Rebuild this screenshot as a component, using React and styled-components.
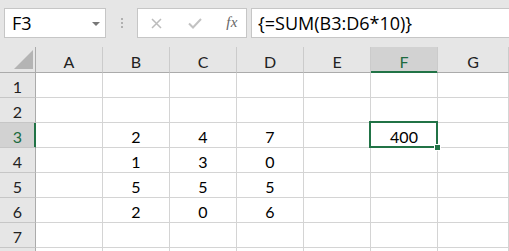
import styled, { createGlobalStyle } from 'styled-components'

const GREEN = '#217346'

const GlobalStyle = createGlobalStyle`
   html, body {
      margin: 0;
      padding: 0;
      background: #ffffff;
   }
   body {
      font-family: Lato, 'Liberation Sans', sans-serif;
   }
`

const columns = ['A', 'B', 'C', 'D', 'E', 'F', 'G']

const data = {
   3: { B: 2, C: 4, D: 7, F: 400 },
   4: { B: 1, C: 3, D: 0 },
   5: { B: 5, C: 5, D: 5 },
   6: { B: 2, C: 0, D: 6 },
}

const active = { col: 'F', row: 3 }

const rows = [1, 2, 3, 4, 5, 6, 7, 8]
const visibleLabel = (r) => (r <= 7 ? r : '')

export default function App() {
   return (
      <Window>
         <GlobalStyle />

         <FormulaBar>
            <NameBox>
               <span>F3</span>
               <Caret />
            </NameBox>

            <Grip>
               <i />
               <i />
               <i />
            </Grip>

            <ButtonGroup>
               <IconButton>
                  <svg width="11" height="11" viewBox="0 0 11 11">
                     <path d="M1 1 L10 10 M10 1 L1 10" stroke="#bcbcbc" strokeWidth="1.5" fill="none" />
                  </svg>
               </IconButton>
               <IconButton>
                  <svg width="14" height="11" viewBox="0 0 14 11">
                     <path d="M1 5.5 L5 9.5 L13 1" stroke="#c2c2c2" strokeWidth="2" fill="none" />
                  </svg>
               </IconButton>
               <Fx>fx</Fx>
            </ButtonGroup>

            <FormulaInput>{'{=SUM(B3:D6*10)}'}</FormulaInput>
         </FormulaBar>

         <Sheet>
            <Corner>
               <svg width="19" height="19" viewBox="0 0 19 19">
                  <polygon points="19,0 19,19 0,19" fill="#b4b4b4" />
               </svg>
            </Corner>
            {columns.map((c) => (
               <ColHead key={c} $selected={c === active.col}>
                  {c}
               </ColHead>
            ))}

            {rows.map((r) => (
               <Row key={r}>
                  <RowHead $selected={r === active.row}>{visibleLabel(r)}</RowHead>
                  {columns.map((c) => {
                     const isActive = r === active.row && c === active.col
                     const value = data[r] ? data[r][c] : undefined
                     return (
                        <Cell key={c} $active={isActive}>
                           {value}
                           {isActive && <FillHandle />}
                        </Cell>
                     )
                  })}
               </Row>
            ))}
         </Sheet>
      </Window>
   )
}

const Window = styled.div`
   width: 100%;
   height: 100vh;
   overflow: hidden;
   background: #ffffff;
`

const FormulaBar = styled.div`
   display: flex;
   align-items: stretch;
   height: 47px;
   padding: 8px 0 9px 4px;
   box-sizing: border-box;
   background: #e6e6e6;
   font-family: 'Open Sans', 'Liberation Sans', sans-serif;
   font-size: 18px;
   color: #000;
`

const NameBox = styled.div`
   width: 102px;
   box-sizing: border-box;
   background: #fff;
   border: 1px solid #c6c6c6;
   display: flex;
   align-items: center;
   justify-content: space-between;
   padding: 0 5px 0 7px;

   span {
      line-height: 1;
      margin-top: -1px;
   }
`

const Caret = styled.div`
   width: 0;
   height: 0;
   border-left: 4px solid transparent;
   border-right: 4px solid transparent;
   border-top: 4px solid #777;
   margin-top: 1px;
`

const Grip = styled.div`
   width: 31px;
   display: flex;
   flex-direction: column;
   align-items: center;
   justify-content: center;
   gap: 2px;

   i {
      display: block;
      width: 2px;
      height: 2px;
      background: #b0b0b0;
   }
`

const ButtonGroup = styled.div`
   width: 110px;
   box-sizing: border-box;
   background: #fff;
   border: 1px solid #c6c6c6;
   display: flex;
   align-items: center;
   padding: 0 8px 0 13px;
`

const IconButton = styled.div`
   width: 37px;
   display: flex;
   align-items: center;
   justify-content: flex-start;
   margin-top: 1px;
`

const Fx = styled.span`
   font-family: 'Liberation Serif', serif;
   font-style: italic;
   font-size: 15px;
   color: #666;
   margin-left: 2px;
   margin-top: -2px;
   letter-spacing: 0.5px;
`

const FormulaInput = styled.div`
   flex: 1;
   margin-left: 4px;
   margin-right: -2px;
   background: #fff;
   border: 1px solid #c6c6c6;
   display: flex;
   align-items: center;
   padding-left: 6px;
   white-space: nowrap;
   line-height: 1;
`

const Sheet = styled.div`
   display: grid;
   grid-template-columns: 36px repeat(6, 67px) 1fr;
   grid-template-rows: 26px;
   grid-auto-rows: 25px;
   font-family: Lato, 'Liberation Sans', sans-serif;
   font-size: 16px;
   color: #000;
`

const Row = styled.div`
   display: contents;
`

const HeadBase = styled.div`
   box-sizing: border-box;
   display: flex;
   align-items: center;
   justify-content: center;
   padding-top: 3px;
   background: #e6e6e6;
   color: #222;
`

const Corner = styled(HeadBase)`
   border-right: 1px solid #ababab;
   border-bottom: 1px solid #ababab;
   justify-content: flex-end;
   align-items: flex-end;
   padding: 0 2px 3px 0;
`

const ColHead = styled(HeadBase)`
   border-right: 1px solid #cbcbcb;
   border-bottom: 1px solid ${(p) => (p.$selected ? GREEN : '#ababab')};
   box-shadow: ${(p) => (p.$selected ? `inset 0 -1px 0 ${GREEN}` : 'none')};
   background: ${(p) => (p.$selected ? '#d2d2d2' : '#e6e6e6')};
   color: ${(p) => (p.$selected ? '#1d6b3f' : '#222')};
`

const RowHead = styled(HeadBase)`
   border-bottom: 1px solid #c6c6c6;
   border-right: 1px solid ${(p) => (p.$selected ? GREEN : '#ababab')};
   box-shadow: ${(p) => (p.$selected ? `inset -1px 0 0 ${GREEN}` : 'none')};
   background: ${(p) => (p.$selected ? '#d2d2d2' : '#e6e6e6')};
   color: ${(p) => (p.$selected ? '#1d6b3f' : '#222')};
`

const Cell = styled.div`
   position: relative;
   box-sizing: border-box;
   border-right: 1px solid #d4d4d4;
   border-bottom: 1px solid #d4d4d4;
   display: flex;
   align-items: center;
   justify-content: center;
   padding-top: 3px;

   ${(p) =>
      p.$active &&
      `
      &::after {
         content: '';
         position: absolute;
         top: -2px;
         left: -2px;
         right: -1px;
         bottom: -1px;
         border: 2px solid ${GREEN};
         pointer-events: none;
      }
   `}
`

const FillHandle = styled.div`
   position: absolute;
   right: -4px;
   bottom: -4px;
   width: 5px;
   height: 5px;
   background: ${GREEN};
   border: 1px solid #fff;
   z-index: 2;
`
